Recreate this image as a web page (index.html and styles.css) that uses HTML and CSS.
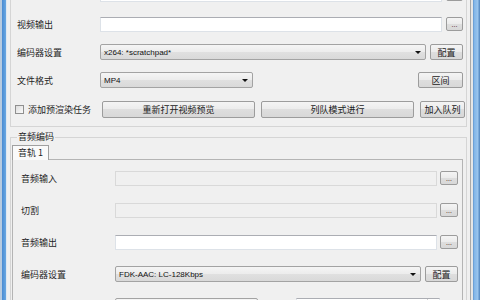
FILE: index.html
```html
<!DOCTYPE html>
<html lang="zh-CN">
<head>
    <meta charset="UTF-8">
    <meta name="viewport" content="width=device-width, initial-scale=1.0">
    <title>编码设置</title>
    <link rel="stylesheet" href="styles.css">
</head>
<body>
    <div class="window">
        <div class="frame-left"></div>
        <div class="content">
            <div class="group video">
                <div class="row row-top">
                    <span class="label"></span>
                    <div class="input"></div>
                    <button class="btn browse"></button>
                </div>
                <div class="row">
                    <span class="label">视频输出</span>
                    <div class="input"></div>
                    <button class="btn browse">...</button>
                </div>
                <div class="row">
                    <span class="label">编码器设置</span>
                    <div class="combo grow"><span class="latin">x264: *scratchpad*</span></div>
                    <button class="btn config">配置</button>
                </div>
                <div class="row">
                    <span class="label">文件格式</span>
                    <div class="combo format"><span class="latin">MP4</span></div>
                    <button class="btn wide push">区间</button>
                </div>
                <div class="row row-actions">
                    <label class="label check"><span class="box"></span>添加预渲染任务</label>
                    <button class="btn action">重新打开视频预览</button>
                    <button class="btn action">列队模式进行</button>
                    <button class="btn wide">加入队列</button>
                </div>
            </div>

            <div class="group audio">
                <div class="group-title">音频编码</div>
                <div class="tabs">
                    <div class="tab">音轨 1</div>
                </div>
                <div class="pane">
                    <div class="row">
                        <span class="label">音频输入</span>
                        <div class="input disabled"></div>
                        <button class="btn browse">...</button>
                    </div>
                    <div class="row">
                        <span class="label">切割</span>
                        <div class="input disabled"></div>
                        <button class="btn browse">...</button>
                    </div>
                    <div class="row">
                        <span class="label">音频输出</span>
                        <div class="input"></div>
                        <button class="btn browse">...</button>
                    </div>
                    <div class="row">
                        <span class="label">编码器设置</span>
                        <div class="combo grow"><span class="latin">FDK-AAC: LC-128Kbps</span></div>
                        <button class="btn config">配置</button>
                    </div>
                    <div class="row row-last">
                        <span class="label"></span>
                        <div class="combo half"></div>
                        <div class="input spin"><span class="spin-arrows"></span></div>
                    </div>
                </div>
            </div>
        </div>
        <div class="frame-right"></div>
    </div>
</body>
</html>
```

FILE: styles.css
```css
* {
    box-sizing: border-box;
}
body {
    margin: 0;
    width: 480px;
    height: 300px;
    overflow: hidden;
    font-family: "Noto Sans CJK SC", "Noto Sans", sans-serif;
    font-size: 9px;
    color: #1e1e1e;
}
.window {
    display: flex;
    height: 300px;
}
.frame-left {
    width: 7px;
    background: linear-gradient(to right, #b7cbe0 0, #b7cbe0 2px, #4a8bd2 2px, #6aa8e2 6px, #dfe8f2 6px);
}
.frame-right {
    width: 10px;
    background: linear-gradient(to right, #a9a9a9 0, #a9a9a9 1px, #e6e6e6 1px, #e6e6e6 3px, #5b8cc4 3px, #7fb4e8 4px, #9cc6ee 8px, #5c8fc6 9px);
}
.content {
    flex: 1;
    background: #f0f0f0;
    overflow: hidden;
}

/* group boxes */
.group {
    margin: 0 3px;
    border: 1px solid #d5d5d5;
}
.video {
    border-top: none;
    padding: 0 3px 8px 6px;
}
.audio {
    margin-top: 10px;
    border-bottom: none;
    padding: 0 3px 0 1px;
}
.group-title {
    width: fit-content;
    margin: -7px 0 0 5px;
    padding: 0 1px;
    line-height: 12px;
    background: #f0f0f0;
}

/* rows */
.row {
    display: flex;
    align-items: center;
    gap: 4px;
    height: 16px;
    margin-top: 12px;
}
.video .row-top {
    margin-top: -14px;
}
.video .row-top + .row {
    margin-top: 14px;
}
.row-actions {
    height: 17px;
    margin-top: 13px;
    gap: 6px;
}
.label {
    flex: none;
    width: 79px;
    white-space: nowrap;
}
.pane .label {
    width: 90px;
}

/* fields */
.input {
    flex: 1;
    height: 15px;
    background: #fff;
    border: 1px solid #dde2e8;
    border-top-color: #abadb3;
}
.input.disabled {
    background: #f0f0f0;
    border-color: #d9d9d9;
}
.combo {
    display: flex;
    align-items: center;
    height: 16px;
    padding: 0 4px 0 3px;
    border: 1px solid #a3a3a3;
    border-radius: 2px;
    background: linear-gradient(#f5f5f5, #ececec 50%, #e0e0e0 50%, #d9d9d9);
}
.combo::after {
    content: "";
    margin-left: auto;
    border-left: 3px solid transparent;
    border-right: 3px solid transparent;
    border-top: 3px solid #111;
}
.combo.grow {
    flex: 1;
}
.combo.format {
    width: 153px;
}
.combo.half {
    width: 143px;
}
.combo.half::after {
    display: none;
}
.latin {
    font-family: "Liberation Sans", Arial, sans-serif;
    font-size: 8px;
    color: #111;
}
.input.spin {
    flex: none;
    width: 144px;
    height: 16px;
    margin-left: 34px;
    display: flex;
    justify-content: flex-end;
}
.spin-arrows {
    width: 12px;
    border-left: 1px solid #d0d0d0;
}
.pane .row-last {
    align-items: flex-start;
    margin-top: 15px;
}

/* buttons */
.btn {
    flex: none;
    height: 16px;
    padding: 0;
    font: inherit;
    color: #222;
    border: 1px solid #9c9c9c;
    border-radius: 2px;
    background: linear-gradient(#f4f4f4, #ebebeb 50%, #dedede 50%, #d8d8d8);
}
.browse {
    width: 17px;
    height: 14px;
    font-size: 7px;
    line-height: 8px;
    color: #6b3f3f;
}
.pane .browse {
    width: 18px;
    margin-left: -1px;
}
.config {
    width: 33px;
}
.wide {
    width: 45px;
}
.push {
    margin-left: auto;
}
.action {
    width: 153px;
    height: 17px;
}
.row-actions .wide {
    height: 17px;
}

/* checkbox */
.check {
    display: flex;
    align-items: center;
    gap: 4px;
    margin-left: -2px;
    margin-right: -2px;
    width: 83px;
}
.box {
    width: 9px;
    height: 9px;
    border: 1px solid #8f8f8f;
    background: linear-gradient(135deg, #dcdcdc, #fbfbfb);
}

/* tabs */
.tabs {
    display: flex;
    margin-top: 2px;
}
.tab {
    position: relative;
    z-index: 1;
    width: 37px;
    height: 15px;
    margin-bottom: -1px;
    padding-left: 5px;
    line-height: 14px;
    border: 1px solid #a0a0a0;
    border-bottom: none;
    background: #fafafa;
}
.pane {
    padding: 10px 4px 0 8px;
    height: 200px;
    border: 1px solid #b4b4b4;
    border-bottom: none;
}
.pane .row {
    margin-top: 16px;
}
.pane .row:first-child {
    margin-top: 0;
}
```
